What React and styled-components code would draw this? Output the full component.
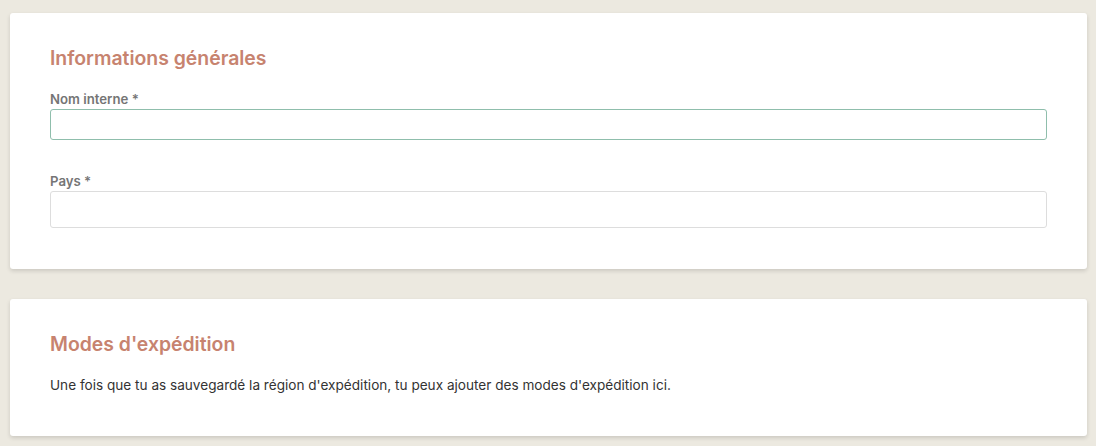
import React from 'react';
import styled, { createGlobalStyle } from 'styled-components';

const GlobalStyle = createGlobalStyle`
  html, body {
    margin: 0;
    padding: 0;
    background: #ece9e0;
    font-family: Inter, "Liberation Sans", sans-serif;
  }
`;

const Page = styled.div`
  display: flex;
  flex-direction: column;
  gap: 30px;
  padding: 13px 9px 13px 10px;
`;

const Card = styled.section`
  background: #fff;
  border-radius: 3px;
  box-shadow: 0 2px 4px rgba(0, 0, 0, 0.14);
  padding: 32px 40px 41px;
  display: flex;
  flex-direction: column;
`;

const Title = styled.h2`
  margin: 0;
  font-size: 19.4px;
  line-height: 26px;
  font-weight: 600;
  color: #c7836f;
`;

const Field = styled.div`
  display: flex;
  flex-direction: column;
  gap: 2px;
  margin-top: ${({ first }) => (first ? '20px' : '33px')};
`;

const Label = styled.label`
  font-size: 13.2px;
  line-height: 16px;
  font-weight: 600;
  color: #757575;
`;

const Input = styled.div`
  box-sizing: border-box;
  height: ${({ tall }) => (tall ? '37px' : '31px')};
  border: 1px solid ${({ focused }) => (focused ? '#8fbeac' : '#dddddd')};
  border-radius: 3px;
  background: #fff;
`;

const Text = styled.p`
  margin: 18px 0 0;
  font-size: 13.6px;
  line-height: 20px;
  color: #333;
`;

export default function App() {
  return (
    <>
      <GlobalStyle />
      <Page>
        <Card>
          <Title>Informations générales</Title>
          <Field first>
            <Label>Nom interne *</Label>
            <Input focused />
          </Field>
          <Field>
            <Label>Pays *</Label>
            <Input tall />
          </Field>
        </Card>
        <Card>
          <Title>Modes d'expédition</Title>
          <Text>
            Une fois que tu as sauvegardé la région d'expédition, tu peux ajouter des modes d'expédition ici.
          </Text>
        </Card>
      </Page>
    </>
  );
}
